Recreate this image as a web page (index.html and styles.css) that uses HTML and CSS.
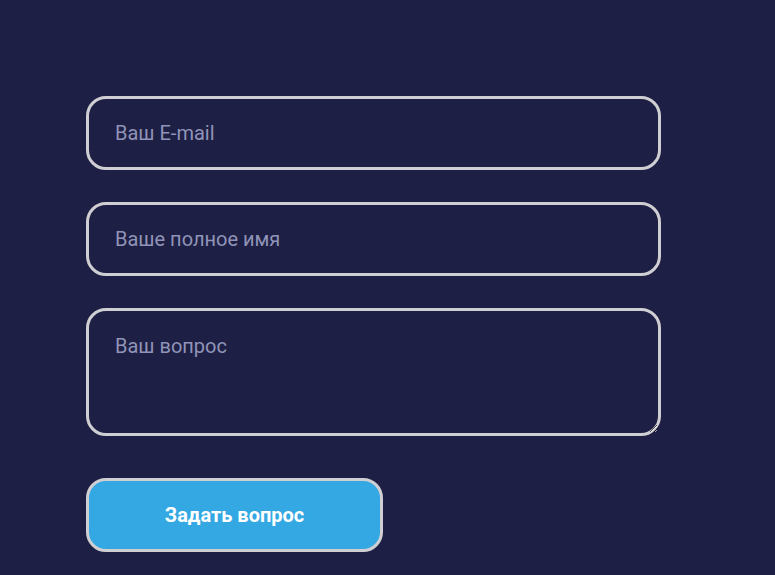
FILE: index.html
```html
<!DOCTYPE html>
<html lang="ru">
<head>
<meta charset="utf-8">
<link rel="stylesheet" href="styles.css">
</head>
<body>
<form class="form">
  <input class="field" type="email" placeholder="Ваш E-mail">
  <input class="field" type="text" placeholder="Ваше полное имя">
  <textarea class="field area" placeholder="Ваш вопрос"></textarea>
  <button class="btn" type="button">Задать вопрос</button>
</form>
</body>
</html>
```
FILE: styles.css
```css
html, body {
  margin: 0;
  background: #1e1f44;
  height: 100%;
}
body {
  overflow: hidden;
}
.form {
  display: flex;
  flex-direction: column;
  align-items: flex-start;
  padding: 96px 0 0 86px;
  gap: 32px;
}
.field {
  box-sizing: border-box;
  width: 575px;
  height: 74px;
  border: 3px solid #cfcfd3;
  border-radius: 20px;
  background: #1e1f44;
  padding: 0 26px;
  font-family: Roboto, "Liberation Sans", sans-serif;
  font-size: 20px;
  color: #ffffff;
  outline: none;
  margin: 0;
}
.field::placeholder {
  color: #9094b8;
  opacity: 1;
}
.area {
  height: 128px;
  padding: 23px 26px;
  resize: vertical;
  display: block;
  line-height: 24px;
}
.form .area {
  margin-bottom: 10px;
}
.btn {
  box-sizing: border-box;
  width: 297px;
  height: 74px;
  border: 3px solid #cfcfd3;
  border-radius: 20px;
  background: #33a8e2;
  color: #ffffff;
  font-family: Roboto, "Liberation Sans", sans-serif;
  font-weight: 700;
  font-size: 20px;
  cursor: pointer;
}
```
